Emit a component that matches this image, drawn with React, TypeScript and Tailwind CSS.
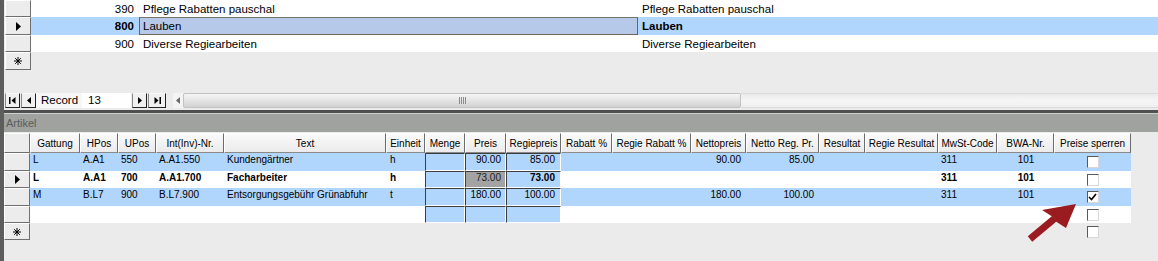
import type { ReactNode } from "react";

const BLUE = "bg-[#b1d6fd]";
const FONT = "font-['Liberation_Sans',Arial,sans-serif]";

type Col = {
  label: string;
  w: string;
  align: string;
  pad: string;
  boxed?: boolean;
  check?: boolean;
};

const COLS: Col[] = [
  { label: "Gattung", w: "w-[50px]", align: "justify-start", pad: "pl-[3px]" },
  { label: "HPos", w: "w-[38px]", align: "justify-start", pad: "pl-[3px]" },
  { label: "UPos", w: "w-[38px]", align: "justify-start", pad: "pl-[3px]" },
  { label: "Int(Inv)-Nr.", w: "w-[68px]", align: "justify-start", pad: "pl-[3px]" },
  { label: "Text", w: "w-[162px]", align: "justify-start", pad: "pl-[3px]" },
  { label: "Einheit", w: "w-[39px]", align: "justify-start", pad: "pl-[4px]" },
  { label: "Menge", w: "w-[40px]", align: "justify-end", pad: "pr-[4px]", boxed: true },
  { label: "Preis", w: "w-[41px]", align: "justify-end", pad: "pr-[4px]", boxed: true },
  { label: "Regiepreis", w: "w-[55px]", align: "justify-end", pad: "pr-[5px]", boxed: true },
  { label: "Rabatt %", w: "w-[51px]", align: "justify-end", pad: "pr-[5px]" },
  { label: "Regie Rabatt %", w: "w-[79px]", align: "justify-end", pad: "pr-[5px]" },
  { label: "Nettopreis", w: "w-[55px]", align: "justify-end", pad: "pr-[5px]" },
  { label: "Netto Reg. Pr.", w: "w-[73px]", align: "justify-end", pad: "pr-[5px]" },
  { label: "Resultat", w: "w-[46px]", align: "justify-end", pad: "pr-[5px]" },
  { label: "Regie Resultat", w: "w-[73px]", align: "justify-end", pad: "pr-[5px]" },
  { label: "MwSt-Code", w: "w-[59px]", align: "justify-start", pad: "pl-[3px]" },
  { label: "BWA-Nr.", w: "w-[57px]", align: "justify-center", pad: "pl-[1px]" },
  { label: "Preise sperren", w: "w-[77px]", align: "justify-center", pad: "", check: true },
];

type Row = {
  kind: "data" | "empty" | "new";
  values?: string[];
  blue?: boolean;
  bold?: boolean;
  current?: boolean;
  checked?: boolean;
  h: string;
};

const ROWS: Row[] = [
  {
    kind: "data",
    blue: true,
    h: "h-[18px]",
    values: ["L", "A.A1", "550", "A.A1.550", "Kundengärtner", "h", "", "90.00", "85.00", "", "", "90.00", "85.00", "", "", "311", "101"],
  },
  {
    kind: "data",
    bold: true,
    current: true,
    h: "h-[17px]",
    values: ["L", "A.A1", "700", "A.A1.700", "Facharbeiter", "h", "", "73.00", "73.00", "", "", "", "", "", "", "311", "101"],
  },
  {
    kind: "data",
    blue: true,
    checked: true,
    h: "h-[18px]",
    values: ["M", "B.L7", "900", "B.L7.900", "Entsorgungsgebühr Grünabfuhr", "t", "", "180.00", "100.00", "", "", "180.00", "100.00", "", "", "311", "101"],
  },
  { kind: "empty", h: "h-[17px]" },
  { kind: "new", h: "h-[17px]" },
];

const Arrow = () => (
  <svg width="5" height="9" viewBox="0 0 5 9">
    <polygon points="0,0 5,4.5 0,9" fill="#000" />
  </svg>
);

const Star = () => (
  <svg width="8" height="8" viewBox="0 0 8 8" stroke="#000" strokeWidth="1">
    <line x1="4" y1="0" x2="4" y2="8" />
    <line x1="0" y1="4" x2="8" y2="4" />
    <line x1="1.2" y1="1.2" x2="6.8" y2="6.8" />
    <line x1="6.8" y1="1.2" x2="1.2" y2="6.8" />
  </svg>
);

function Selector({ children, h, w = "w-[26px]" }: { children?: ReactNode; h: string; w?: string }) {
  return (
    <div
      className={`${w} ${h} shrink-0 flex items-center justify-center bg-[#ececec] border border-t-white border-l-white border-r-[#6f6f6f] border-b-[#6f6f6f]`}
    >
      {children}
    </div>
  );
}

function CheckBox({ checked }: { checked?: boolean }) {
  return (
    <div className="w-[12px] h-[12px] bg-white border border-t-[#5a5a5a] border-l-[#5a5a5a] border-r-[#d8d8d8] border-b-[#d8d8d8] flex items-center justify-center">
      {checked && (
        <svg width="9" height="8" viewBox="0 0 9 8">
          <path d="M1 4 L3.5 6.5 L8 1" fill="none" stroke="#000" strokeWidth="1.6" />
        </svg>
      )}
    </div>
  );
}

function NavBtn({ children, w }: { children: ReactNode; w: string }) {
  return (
    <div className={`${w} h-full flex items-center justify-center bg-[#f0f0f0] border border-l-[#8a8a8a] border-t-[#f8f8f8] border-r-[#222] border-b-[#222]`}>
      {children}
    </div>
  );
}

function TopRow({
  h,
  sel,
  num,
  text,
  right,
  current,
  isNew,
}: {
  h: string;
  sel?: ReactNode;
  num?: string;
  text?: string;
  right?: string;
  current?: boolean;
  isNew?: boolean;
}) {
  return (
    <div className={`flex ${h}`}>
      <div className="ml-[1px]">
        <Selector h={h}>{sel}</Selector>
      </div>
      {!isNew && (
        <div className={`flex flex-1 ${current ? BLUE : "bg-white"}`}>
          <div className={`w-[108px] flex items-center justify-end pr-[5px] ${current ? "font-bold" : ""}`}>{num}</div>
          <div
            className={`w-[499px] flex items-center pl-[3px] ${
              current ? "bg-[#b6c9e8] border border-[#6e6458] border-t-[#7b7165]" : "border border-transparent"
            }`}
          >
            {text}
          </div>
          <div className={`flex-1 flex items-center pl-[4px] ${current ? "font-bold" : ""}`}>{right}</div>
        </div>
      )}
    </div>
  );
}

function DataCell({ col, row, value, idx }: { col: Col; row: Row; value: string; idx: number }) {
  if (col.check) {
    return (
      <div className={`${col.w} shrink-0 flex justify-center pt-[3px]`}>
        <CheckBox checked={row.checked} />
      </div>
    );
  }
  if (row.kind === "new") return <div className={`${col.w} shrink-0`} />;
  if (col.boxed) {
    const gray = row.current && idx === 7;
    return (
      <div
        className={`${col.w} shrink-0 flex ${col.align} ${col.pad} leading-[12px] ${
          gray ? "bg-[#a3a3a3] font-normal text-[#202020]" : BLUE
        } border border-l-[#3d3d3d] border-t-[#3d3d3d] border-r-white border-b-white`}
      >
        {value}
      </div>
    );
  }
  return (
    <div className={`${col.w} shrink-0 flex ${col.align} ${col.pad} pt-[1px] leading-[12px] whitespace-nowrap overflow-hidden`}>
      {value}
    </div>
  );
}

export default function App() {
  return (
    <div className={`relative w-[1158px] h-[261px] overflow-hidden bg-[#ebebeb] flex text-black ${FONT}`}>
      <div className="w-[4px] shrink-0 bg-[#5d5d5d]" />
      <div className="flex-1 flex flex-col">
        {/* upper subform */}
        <div className="h-[93px] flex flex-col text-[11.5px] leading-[14px]">
          <TopRow h="h-[17px]" num="390" text="Pflege Rabatten pauschal" right="Pflege Rabatten pauschal" />
          <TopRow h="h-[18px]" sel={<Arrow />} num="800" text="Lauben" right="Lauben" current />
          <TopRow h="h-[17px]" num="900" text="Diverse Regiearbeiten" right="Diverse Regiearbeiten" />
          <TopRow h="h-[18px]" sel={<Star />} isNew />
        </div>

        {/* record navigation + scrollbar */}
        <div className="h-[15px] flex items-stretch text-[11.5px] leading-[13px]">
          <div className="ml-[1px] flex items-stretch gap-[1px]">
            <NavBtn w="w-[15px]">
              <svg width="7" height="7" viewBox="0 0 7 7">
                <rect x="0" y="0" width="1.5" height="7" fill="#000" />
                <polygon points="6.5,0 2.5,3.5 6.5,7" fill="#000" />
              </svg>
            </NavBtn>
            <NavBtn w="w-[15px]">
              <svg width="4" height="7" viewBox="0 0 4 7">
                <polygon points="4,0 0,3.5 4,7" fill="#000" />
              </svg>
            </NavBtn>
          </div>
          <div className="w-[46px] bg-[#f7f7f7] flex items-center pl-[5px]">Record</div>
          <div className="w-[49px] bg-white flex items-center pl-[6px]">13</div>
          <div className="ml-[1px] flex items-stretch gap-[1px]">
            <NavBtn w="w-[15px]">
              <svg width="4" height="7" viewBox="0 0 4 7">
                <polygon points="0,0 4,3.5 0,7" fill="#000" />
              </svg>
            </NavBtn>
            <NavBtn w="w-[18px]">
              <svg width="7" height="7" viewBox="0 0 7 7">
                <polygon points="0.5,0 4.5,3.5 0.5,7" fill="#000" />
                <rect x="5.5" y="0" width="1.5" height="7" fill="#000" />
              </svg>
            </NavBtn>
          </div>
          <div className="w-[7px]" />
          <div className="w-[10px] bg-[#f4f4f4] flex items-center justify-center">
            <svg width="4" height="7" viewBox="0 0 4 7">
              <polygon points="4,0 0,3.5 4,7" fill="#6a6a6a" />
            </svg>
          </div>
          <div className="w-[558px] rounded-[2px] bg-gradient-to-b from-[#f6f6f6] via-[#e4e4e4] to-[#d2d2d2] border border-[#c2c2c2] flex items-center justify-center">
            <div className="flex gap-[1px] h-[7px]">
              <div className="w-[1px] bg-[#8c8c8c]" />
              <div className="w-[1px] bg-[#8c8c8c]" />
              <div className="w-[1px] bg-[#8c8c8c]" />
              <div className="w-[1px] bg-[#8c8c8c]" />
            </div>
          </div>
          <div className="flex-1 bg-gradient-to-b from-[#ebebeb] via-[#f5f5f5] to-[#efefef] border-y border-[#dadada]" />
        </div>

        <div className="h-[2px]" />
        <div className="h-[3px] bg-[#4f4f4f]" />
        <div className="h-[1px] bg-[#cfcfcf]" />
        <div className="h-[18px] bg-[#a0a29f] flex items-center pl-[2px] text-[11px] text-[#5a5c5a]">Artikel</div>
        <div className="h-[1px]" />

        {/* lower subform */}
        <div className="flex flex-col text-[10px]">
          <div className="flex h-[20px]">
            <Selector h="h-[20px]" />
            {COLS.map((c) => (
              <div
                key={c.label}
                className={`${c.w} shrink-0 flex items-center justify-center whitespace-nowrap bg-gradient-to-b from-[#fafafa] to-[#ebebeb] border border-t-white border-l-white border-r-[#6c6c6c] border-b-[#8a8a8a]`}
              >
                {c.label}
              </div>
            ))}
          </div>
          {ROWS.map((r, ri) => (
            <div key={ri} className={`flex ${r.h}`}>
              <Selector h={r.h}>
                {r.current && <Arrow />}
                {r.kind === "new" && <Star />}
              </Selector>
              <div
                className={`flex ${r.kind === "new" ? "" : r.blue ? BLUE : "bg-white"} ${r.bold ? "font-bold" : ""}`}
              >
                {COLS.map((c, ci) => (
                  <DataCell key={c.label} col={c} row={r} idx={ci} value={r.values ? r.values[ci] ?? "" : ""} />
                ))}
              </div>
            </div>
          ))}
        </div>
      </div>

      {/* red annotation arrow */}
      <svg className="absolute left-[1020px] top-[195px]" width="70" height="55" viewBox="0 0 70 55">
        <polygon
          points="7.8,41.3 31.8,21.3 22,15 56,9 46,33 36.2,26.7 12.2,46.7"
          fill="#9a1c20"
        />
      </svg>
    </div>
  );
}
